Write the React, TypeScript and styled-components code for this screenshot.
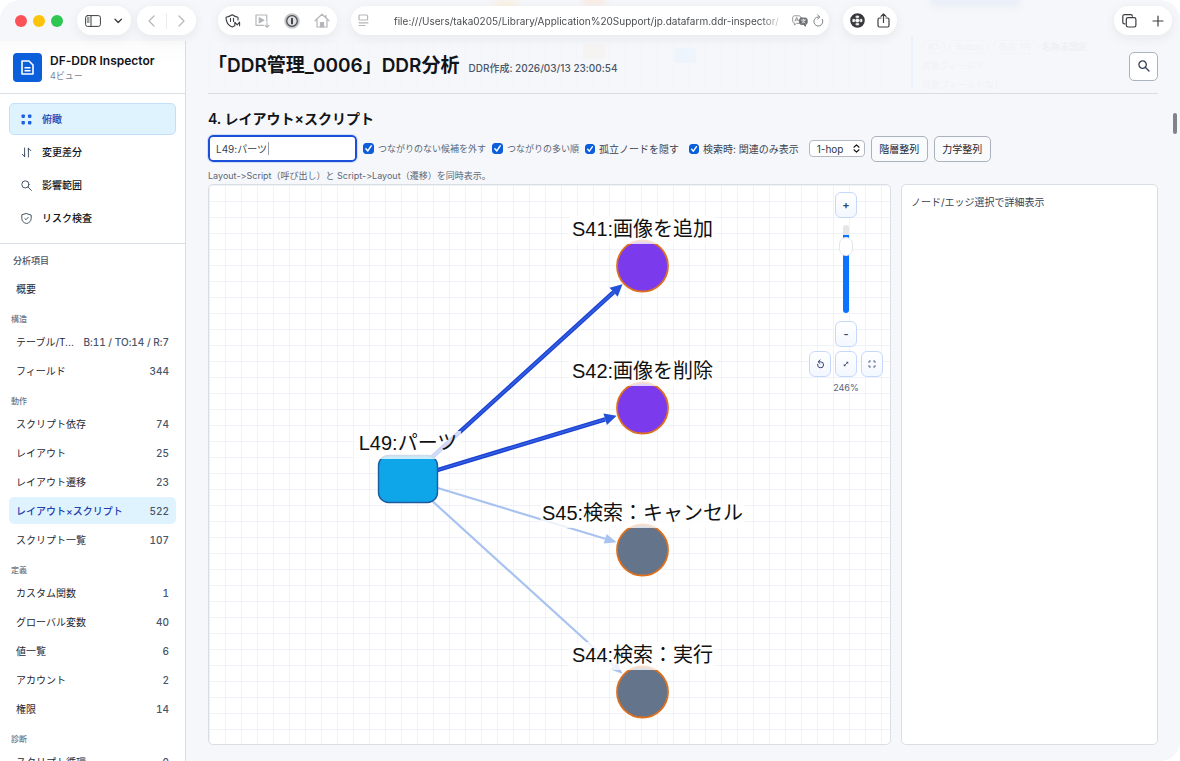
import React from "react";
import styled, { createGlobalStyle, css } from "styled-components";

const muted = "#5b6778";
const line = "#d9dee5";
const blue = "#0b5fdb";

const Global = createGlobalStyle`
  *, *::before, *::after { box-sizing: border-box; }
  body {
    margin: 0;
    background: #fff;
    color: #111418;
    font-family: Inter, "Noto Sans CJK JP", sans-serif;
    font-size: 10px;
    font-feature-settings: "calt" 0;
  }
  button, input, select { font: inherit; color: inherit; margin: 0; }
  button { padding: 0; cursor: pointer; }
  h1, h2, h3, p, ul { margin: 0; padding: 0; }
  ul { list-style: none; }
  a { color: inherit; text-decoration: none; }
`;

/* ---------- window frame ---------- */

const Window = styled.div`
  position: relative;
  display: flex;
  flex-direction: column;
  height: 100vh;
  overflow: hidden;
  border-radius: 20px;
  background: #f6f7fa;
`;

const TitleBar = styled.header`
  position: relative;
  z-index: 2;
  display: flex;
  align-items: center;
  flex: none;
  height: 41px;
  padding: 0 8px 0 15px;
`;

const Lights = styled.div`
  display: flex;
  gap: 6px;
  margin-right: 14px;
`;

const Light = styled.span<{ $color: string }>`
  width: 12px;
  height: 12px;
  border-radius: 50%;
  background: ${(p) => p.$color};
`;

const Pill = styled.div<{ $after?: number; $end?: boolean; $pad?: number; $gap?: number }>`
  display: flex;
  align-items: center;
  justify-content: space-between;
  flex: none;
  height: 29px;
  padding: 0 ${(p) => p.$pad ?? 8}px;
  margin-right: ${(p) => p.$after ?? 0}px;
  margin-left: ${(p) => (p.$end ? "auto" : 0)};
  gap: ${(p) => p.$gap ?? 12}px;
  border-radius: 15px;
  background: #fff;
  box-shadow: 0 3px 12px rgba(20, 25, 40, 0.07);
`;

const AddressPill = styled(Pill)`
  flex: 0 1 478px;
  gap: 5px;
  padding: 0 5px 0 7px;
`;

const Address = styled.input`
  flex: 1;
  min-width: 0;
  margin: 0 3px 0 20px;
  padding: 0;
  border: 0;
  outline: 0;
  background: none;
  font-size: 10px;
  color: #4b4d51;
  mask-image: linear-gradient(to right, #000 94%, transparent);
`;

const BarButton = styled.button<{ $dim?: boolean }>`
  display: grid;
  place-items: center;
  border: 0;
  background: none;
  color: ${(p) => (p.$dim ? "#b4b6b9" : "#3c3e42")};
`;

const Divider = styled.span`
  width: 1px;
  height: 16px;
  background: #ececee;
`;

/* ---------- content scrolled underneath the translucent bars ---------- */

const Underlay = styled.div`
  position: absolute;
  inset: 0 0 auto 186px;
  height: 90px;
  overflow: hidden;
  pointer-events: none;
`;

const UnderGrid = styled.div`
  position: absolute;
  inset: 41px 289px 0 22px;
  background-image: linear-gradient(#f3f5f8 1px, transparent 1px),
    linear-gradient(90deg, #f3f5f8 1px, transparent 1px);
  background-size: 16px 16px;
`;

const UnderBlock = styled.span<{ $x: number; $y: number; $w: number; $h: number; $c: string; $soft?: boolean }>`
  position: absolute;
  left: ${(p) => p.$x}px;
  top: ${(p) => p.$y}px;
  width: ${(p) => p.$w}px;
  height: ${(p) => p.$h}px;
  border-radius: 3px;
  background: ${(p) => p.$c};
  filter: ${(p) => (p.$soft ? "blur(3px)" : "none")};
`;

const UnderCard = styled.div`
  position: absolute;
  top: 37px;
  right: 22px;
  width: 247px;
  height: 52px;
  padding-left: 9px;
  border-left: 2px solid #eaf1fa;
  color: #f0f2f5;
  font-size: 9px;
  line-height: 19px;
`;

const UnderTags = styled.div`
  display: flex;
  align-items: center;
  gap: 4px;
  height: 19px;
  line-height: 12px;
  span { padding: 0 5px; border: 1px solid #f2f4f7; border-radius: 8px; }
  b { color: #edf0f4; font-weight: 600; }
`;

/* ---------- sidebar ---------- */

const Body = styled.div`
  position: relative;
  display: flex;
  flex: 1;
  min-height: 0;
`;

const Sidebar = styled.aside`
  flex: none;
  width: 186px;
  overflow: hidden;
  border-right: 1px solid ${line};
  background: linear-gradient(#fbfbfc, #fff 24px);
`;

const Brand = styled.div`
  display: flex;
  align-items: center;
  gap: 8px;
  height: 53px;
  padding: 0 13px;
  border-bottom: 1px solid ${line};
`;

const Logo = styled.span`
  display: grid;
  place-items: center;
  width: 29px;
  height: 29px;
  border-radius: 4px;
  background: ${blue};
`;

const BrandName = styled.h2`
  font-size: 12px;
  line-height: 17px;
  font-weight: 600;
`;

const BrandSub = styled.p`
  font-size: 9px;
  line-height: 13px;
  color: #7b8491;
`;

const Views = styled.nav`
  display: flex;
  flex-direction: column;
  gap: 1px;
  padding: 9px;
  border-bottom: 1px solid ${line};
`;

const View = styled.a<{ $on?: boolean }>`
  display: flex;
  align-items: center;
  gap: 10px;
  height: 32px;
  padding: 0 11px;
  border: 1px solid transparent;
  border-radius: 5px;
  font-size: 10px;
  line-height: 14px;
  font-weight: 500;
  ${(p) =>
    p.$on &&
    css`
      border-color: #c3e0fb;
      background: #dff3fe;
      color: #1e40af;
    `}
  svg { color: ${(p) => (p.$on ? "#1d5fe0" : "#475569")}; }
`;

const Sections = styled.nav`
  padding: 0 9px;
`;

const SectionsTitle = styled.h3`
  padding: 10px 4px 7px;
  font-size: 9px;
  line-height: 14px;
  font-weight: 500;
  color: #475569;
`;

const GroupTitle = styled.h3`
  padding: 11px 2px 3px;
  font-size: 8px;
  line-height: 12px;
  font-weight: 500;
  color: #6b7686;
`;

const Items = styled.ul`
  display: flex;
  flex-direction: column;
  gap: 2px;
`;

const Item = styled.a<{ $on?: boolean }>`
  display: flex;
  align-items: center;
  justify-content: space-between;
  gap: 8px;
  height: 27px;
  padding: 0 7px;
  border-radius: 5px;
  font-size: 10px;
  background: ${(p) => (p.$on ? "#dff3fe" : "none")};
  color: ${(p) => (p.$on ? "#1e40af" : "#1f2733")};
  font-weight: ${(p) => (p.$on ? 500 : 400)};
`;

const ItemName = styled.span`
  white-space: nowrap;
`;

const ItemCount = styled.span`
  flex: none;
  font-weight: 500;
  font-variant-numeric: tabular-nums;
  color: #475569;
`;

/* ---------- main ---------- */

const Main = styled.main`
  display: flex;
  flex-direction: column;
  flex: 1;
  min-width: 0;
  padding: 0 22px 16px;
`;

const PageHead = styled.div`
  display: flex;
  align-items: center;
  gap: 9px;
  flex: none;
  height: 53px;
  padding-bottom: 2px;
  border-bottom: 1px solid ${line};
`;

const Title = styled.h1`
  font-size: 19px;
  line-height: 24px;
  font-weight: 600;
  white-space: nowrap;
`;

const Created = styled.span`
  padding-top: 2px;
  font-size: 10px;
  font-weight: 500;
  color: #4b5768;
`;

const SearchButton = styled.button`
  display: grid;
  place-items: center;
  width: 29px;
  height: 29px;
  margin-left: auto;
  border: 1px solid #aab2bd;
  border-radius: 5px;
  background: #fff;
  color: #334155;
`;

const Heading = styled.h2`
  margin-top: 15px;
  font-size: 14px;
  line-height: 19px;
  font-weight: 600;
`;

const Tools = styled.div`
  display: flex;
  align-items: center;
  gap: 6px;
  height: 27px;
  margin-top: 7px;
`;

const QueryBox = styled.span`
  position: relative;
  flex: none;
`;

const Query = styled.input`
  display: block;
  width: 149px;
  height: 27px;
  padding: 0 6px;
  border: 2px solid #1d4ed8;
  border-radius: 5px;
  outline: 1px solid #cfe0fb;
  background: #fff;
  font-size: 10px;
  color: #3a4250;
`;

const Caret = styled.span`
  position: absolute;
  top: 7px;
  left: 60px;
  width: 1px;
  height: 13px;
  background: #9aa0a8;
`;

const Check = styled.label<{ $large?: boolean }>`
  display: flex;
  align-items: center;
  gap: 4px;
  margin-right: ${(p) => (p.$large ? 4 : 0)}px;
  white-space: nowrap;
  font-size: ${(p) => (p.$large ? 10 : 9)}px;
  color: ${(p) => (p.$large ? "#3a4250" : muted)};
`;

const CheckMark = styled.span<{ $size: number }>`
  display: grid;
  width: ${(p) => p.$size}px;
  height: ${(p) => p.$size}px;
  > * { grid-area: 1 / 1; width: 100%; height: 100%; }
  svg { pointer-events: none; opacity: 0; }
  input:checked + svg { opacity: 1; }
`;

const CheckInput = styled.input`
  appearance: none;
  border: 1px solid ${blue};
  border-radius: 3px;
  background: #fff;
  &:checked { background: ${blue}; }
`;

const Hop = styled.span`
  position: relative;
  flex: none;
  svg { position: absolute; right: 5px; top: 4px; pointer-events: none; }
`;

const HopSelect = styled.select`
  appearance: none;
  display: block;
  width: 56px;
  height: 17px;
  padding: 0 7px;
  border: 1px solid #b3bac4;
  border-radius: 4px;
  background: #fff;
  font-size: 10px;
  color: #30363f;
`;

const ToolButton = styled.button`
  flex: none;
  width: 57px;
  height: 26px;
  border: 1px solid #aab2bd;
  border-radius: 5px;
  background: #f9fafc;
  font-size: 10px;
  line-height: 14px;
  color: #1f2733;
`;

const Note = styled.p`
  margin-top: 7px;
  margin-bottom: 1px;
  font-size: 9px;
  line-height: 14px;
  color: ${muted};
`;

const Columns = styled.div`
  display: grid;
  grid-template-columns: minmax(0, 1fr) 257px;
  gap: 10px;
  flex: 1;
  min-height: 0;
`;

const panel = css`
  border: 1px solid ${line};
  border-radius: 5px;
  background-color: #fff;
`;

const Canvas = styled.section`
  ${panel}
  position: relative;
  overflow: hidden;
  background-image: linear-gradient(#eff2f6 1px, transparent 1px),
    linear-gradient(90deg, #eff2f6 1px, transparent 1px);
  background-size: 16px 16px;
`;

const GraphSvg = styled.svg`
  display: block;
  width: 100%;
  height: 100%;
  text {
    font-family: "Liberation Sans", "Noto Sans CJK JP", sans-serif;
    font-size: 20px;
    text-anchor: middle;
    fill: #111;
  }
`;

const Detail = styled.aside`
  ${panel}
  padding: 10px 9px;
  font-size: 10px;
  line-height: 14px;
  color: #3a4250;
`;

const Zoom = styled.div`
  position: absolute;
  top: 7px;
  right: 7px;
  display: flex;
  flex-direction: column;
  align-items: center;
`;

const ZoomButton = styled.button`
  display: grid;
  place-items: center;
  width: 22px;
  height: 26px;
  border: 1px solid #c5d8fc;
  border-radius: 6px;
  background: linear-gradient(#fff, #f3f7ff);
  font-size: 11px;
  font-weight: 600;
  color: #33436b;
`;

const ZoomRow = styled.div`
  display: flex;
  gap: 4px;
  margin-top: 4px;
`;

const ZoomSlider = styled.input`
  appearance: none;
  writing-mode: vertical-lr;
  direction: rtl;
  width: 14px;
  height: 88px;
  margin: 7px 0 8px;
  background: none;
  &::-webkit-slider-runnable-track {
    width: 6px;
    height: 88px;
    border-radius: 3px;
    background: linear-gradient(#e6e6e8 10px, #0a74ff 10px);
  }
  &::-webkit-slider-thumb {
    appearance: none;
    width: 14px;
    height: 19px;
    margin-left: -4px;
    border: 1px solid #e4e7eb;
    border-radius: 7px;
    background: #fff;
  }
`;

const ZoomValue = styled.output`
  margin-top: 5px;
  font-size: 9px;
  line-height: 12px;
  color: #56637a;
`;

const ScrollThumb = styled.span`
  position: absolute;
  top: 113px;
  right: 3px;
  width: 4px;
  height: 21px;
  border-radius: 2px;
  background: #808388;
`;

/* ---------- icons ---------- */

type IconProps = { w: number; h?: number; sw?: number; children: React.ReactNode };
const Icon = ({ w, h = w, sw = 1, children }: IconProps) => (
  <svg
    width={w}
    height={h}
    viewBox={`0 0 ${w} ${h}`}
    fill="none"
    stroke="currentColor"
    strokeWidth={sw}
    strokeLinecap="round"
    strokeLinejoin="round"
    aria-hidden="true"
  >
    {children}
  </svg>
);

const viewIcons: Record<string, React.ReactNode> = {
  grid: (
    <Icon w={11}>
      <g fill="currentColor" stroke="none">
        <rect x="0.5" y="0.5" width="3.4" height="3.4" rx="0.8" />
        <rect x="7" y="0.5" width="3.4" height="3.4" rx="0.8" />
        <rect x="0.5" y="7" width="3.4" height="3.4" rx="0.8" />
        <rect x="7" y="7" width="3.4" height="3.4" rx="0.8" />
      </g>
    </Icon>
  ),
  arrows: (
    <Icon w={11}>
      <path d="M3.6 1v8.6M1.2 7.3l2.4 2.4V7M7.4 10V1.2M7.4 4V1.2l2.5 2.5" />
    </Icon>
  ),
  search: (
    <Icon w={11}>
      <circle cx="4.4" cy="4.4" r="3.6" />
      <path d="M7.1 7.1l3.300 3.300" />
    </Icon>
  ),
  shield: (
    <Icon w={11}>
      <path d="M5.5.6l4.700 1.500v3.400c0 2.500-1.900 4.300-4.700 5.100-2.800-.8-4.700-2.600-4.700-5.100V2.100z" />
      <path d="M3.900 5.700l1.200 1L7.200 4.400" />
    </Icon>
  ),
};

/* ---------- data ---------- */

const views = [
  { icon: "grid", name: "俯瞰", on: true },
  { icon: "arrows", name: "変更差分" },
  { icon: "search", name: "影響範囲" },
  { icon: "shield", name: "リスク検査" },
];

type Row = [string, string?];
const groups: { title?: string; rows: Row[] }[] = [
  { rows: [["概要"]] },
  { title: "構造", rows: [["テーブル/T...", "B:11 / TO:14 / R:7"], ["フィールド", "344"]] },
  {
    title: "動作",
    rows: [
      ["スクリプト依存", "74"],
      ["レイアウト", "25"],
      ["レイアウト遷移", "23"],
      ["レイアウト×スクリプト", "522"],
      ["スクリプト一覧", "107"],
    ],
  },
  {
    title: "定義",
    rows: [
      ["カスタム関数", "1"],
      ["グローバル変数", "40"],
      ["値一覧", "6"],
      ["アカウント", "2"],
      ["権限", "14"],
    ],
  },
  { title: "診断", rows: [["スクリプト循環", "0"]] },
];

const current = "レイアウト×スクリプト";

const scripts = [
  { y: 81, label: "S41:画像を追加", half: 74, fill: "#7c3aed" },
  { y: 223, label: "S42:画像を削除", half: 74, fill: "#7c3aed" },
  { y: 365, label: "S45:検索：キャンセル", half: 102, fill: "#64748b" },
  { y: 507, label: "S44:検索：実行", half: 74, fill: "#64748b" },
];

const source = { x: 199, y: 294 };
const targetX = 433.5;

function Edge({ y, strong }: { y: number; strong: boolean }) {
  const dx = targetX - source.x;
  const dy = y - source.y;
  const len = Math.hypot(dx, dy);
  const ux = dx / len;
  const uy = dy / len;
  const tip = { x: targetX - ux * 27, y: y - uy * 27 };
  const base = { x: tip.x - ux * 12, y: tip.y - uy * 12 };
  const half = strong ? 6 : 5;
  const head = `${tip.x},${tip.y} ${base.x - uy * half},${base.y + ux * half} ${base.x + uy * half},${base.y - ux * half}`;
  const coords = { x1: source.x, y1: source.y, x2: base.x, y2: base.y };
  return (
    <g>
      <line {...coords} stroke={strong ? "#1c40d4" : "#a9c3f0"} strokeWidth={strong ? 4.4 : 2.2} />
      {strong && <line {...coords} stroke="#315fe0" strokeWidth="1.8" />}
      <polygon points={head} fill={strong ? "#2450da" : "#a9c3f0"} />
    </g>
  );
}

function Graph() {
  return (
    <GraphSvg role="img" aria-label="L49:パーツ の関連グラフ">
      {scripts.map((s, i) => (
        <Edge key={s.label} y={s.y} strong={i < 2} />
      ))}
      {scripts.map((s) => (
        <g key={s.label}>
          <circle cx={targetX} cy={s.y} r="25.5" fill={s.fill} stroke="#de6f1c" strokeWidth="1.8" />
          <rect x={targetX - s.half} y={s.y - 50} width={s.half * 2} height="28" fill="#fff" fillOpacity="0.78" />
          <text x={targetX} y={s.y - 30}>{s.label}</text>
        </g>
      ))}
      <rect x="169.500" y="270.500" width="59" height="47" rx="10" fill="#0ea5e9" stroke="#1e5aa0" strokeWidth="1.400" />
      <rect x="145" y="246" width="107" height="28" fill="#fff" fillOpacity="0.78" />
      <text x="199" y="265">L49:パーツ</text>
    </GraphSvg>
  );
}

function Option({ label, large }: { label: string; large?: boolean }) {
  return (
    <Check $large={large}>
      <CheckMark $size={large ? 10 : 11}>
        <CheckInput type="checkbox" defaultChecked />
        <svg viewBox="0 0 11 11" fill="none" stroke="#fff" strokeWidth="1.5" strokeLinecap="round" strokeLinejoin="round" aria-hidden="true">
          <path d="M2.900 5.800l1.900 2.100 3.400-5" />
        </svg>
      </CheckMark>
      {label}
    </Check>
  );
}

function BrowserBar() {
  return (
    <TitleBar>
      <Lights>
        <Light $color="#fb5258" />
        <Light $color="#fbc30b" />
        <Light $color="#2fc752" />
      </Lights>
      <Pill $after={6} $gap={13}>
        <BarButton aria-label="サイドバー">
          <Icon w={16} h={12}>
            <rect x="0.6" y="0.6" width="14.800" height="10.800" rx="2" />
            <path d="M6 .8v10.400M2.300 3h1.800M2.300 5h1.800M2.300 7h1.800" />
          </Icon>
        </BarButton>
        <BarButton aria-label="タブグループ">
          <Icon w={9} h={6} sw={1.3}><path d="M1 1.200l3.200 3.300 3.200-3.300" /></Icon>
        </BarButton>
      </Pill>
      <Pill $after={22} $pad={11} $gap={11}>
        <BarButton $dim aria-label="戻る">
          <Icon w={7} h={12} sw={1.200}><path d="M6 1L1 6l5 5" /></Icon>
        </BarButton>
        <Divider />
        <BarButton $dim aria-label="進む">
          <Icon w={7} h={12} sw={1.200}><path d="M1 1l5 5-5 5" /></Icon>
        </BarButton>
      </Pill>
      <Pill $after={14} $pad={7} $gap={14}>
        <BarButton aria-label="プライバシー">
          <Icon w={16} h={14} sw={1.100}>
            <path d="M13 6V3.300C11 3 9.300 2.300 7.200.8 5.200 2.200 3.200 3 1 3.200c0 4.600 1.700 8 6.200 9.800l2-1" />
            <path d="M5.500 4.300v3.200M8.500 4.300v3.200M9.800 11.800V8.200l2.400 2.600 2.400-2.600v3.600" />
          </Icon>
        </BarButton>
        <BarButton $dim aria-label="再生">
          <Icon w={15} h={14} sw={1.200}>
            <path d="M8.500 11.300H1V1h10.800v6.500M12 9v4M10 11.300l2 2 2-2" />
            <path d="M4.300 3.700v5l4.500-2.500z" fill="currentColor" />
          </Icon>
        </BarButton>
        <BarButton aria-label="パスワード">
          <Icon w={16}>
            <circle cx="8" cy="8" r="7.800" fill="#c6c8cb" stroke="none" />
            <circle cx="8" cy="8" r="5.300" fill="#dfe0e2" stroke="#4b4d51" strokeWidth="1.300" />
            <path d="M8 5.600v4.800" strokeWidth="1.900" />
          </Icon>
        </BarButton>
        <BarButton $dim aria-label="ホーム">
          <Icon w={16} h={15} sw={1.200}>
            <path d="M1 7.800L8 1.200l7 6.600M3 6.500V14h10V6.500M12 4.500V2" />
            <path d="M6.500 14V9.500h3V14z" fill="currentColor" />
          </Icon>
        </BarButton>
      </Pill>
      <AddressPill $after={14}>
        <BarButton $dim aria-label="ページメニュー">
          <Icon w={11} h={13} sw={1.200}>
            <rect x="1" y="1" width="8.600" height="5" rx="1" />
            <path d="M1 8.800h9M1 11.500h6" />
          </Icon>
        </BarButton>
        <Address
          readOnly
          aria-label="アドレス"
          value="file:///Users/taka0205/Library/Application%20Support/jp.datafarm.ddr-inspector/"
        />
        <BarButton aria-label="翻訳">
          <Icon w={16} h={12} sw={0.900}>
            <path d="M7 8.300H4.500L2.500 10V8.200C1.300 8 .7 7.300.7 6.200V2.800C.7 1.500 1.400.8 2.700.8h4c1.300 0 2 .7 2 1.700M3 6l1.700-3.600L6.400 6M3.600 5h2.200" stroke="#8a8c90" />
            <path d="M9.500 3h3.700c1.300 0 2 .7 2 2v2.500c0 1-.6 1.800-1.700 1.900v1.900l-2-1.800h-2c-1.300 0-2-.7-2-2V5c0-1.300.7-2 2-2z" fill="#6c6e72" stroke="#6c6e72" />
            <path d="M9.300 5h4.400M11.500 4.200V5M10 8c1.500-.6 2.400-1.600 2.700-3M10.300 5.800c.7 1 1.500 1.800 2.700 2.200" stroke="#fff" strokeWidth="0.700" />
          </Icon>
        </BarButton>
        <BarButton aria-label="再読み込み">
          <Icon w={11} h={13}>
            <path d="M9.300 5.300A4.500 4.500 0 1 1 5.200 3h1M4.600.8L6.700 3 4.600 5.200" stroke="#808286" />
          </Icon>
        </BarButton>
      </AddressPill>
      <Pill $pad={7}>
        <BarButton aria-label="拡張機能">
          <Icon w={15}>
            <circle cx="7.500" cy="7.500" r="6.500" stroke="#37393d" strokeWidth="1.600" fill="#37393d" />
            <path d="M6.300 3h2.400v1.600H6.300zM6.300 10.400h2.400V12H6.300zM3 6.300h1.600v2.400H3zM10.400 6.300H12v2.400h-1.600zM5.900 6.800h3.200v1.400H5.900zM6.800 5.900h1.400v3.200H6.800z" fill="#fff" stroke="#fff" strokeWidth="0.600" />
          </Icon>
        </BarButton>
        <BarButton aria-label="共有">
          <Icon w={13} h={15} sw={1.200}>
            <path d="M4 5H2.500C1.500 5 1 5.500 1 6.500v6c0 1 .5 1.500 1.500 1.500h8c1 0 1.500-.5 1.500-1.500v-6c0-1-.5-1.500-1.500-1.500H9M6.500 9.500V1M4 3.300L6.500.8 9 3.300" />
          </Icon>
        </BarButton>
      </Pill>
      <Pill $end $gap={15}>
        <BarButton aria-label="タブ一覧">
          <Icon w={15} h={14} sw={1.200}>
            <path d="M3 9.800H2.500C1.300 9.800.8 9.200.8 8.200v-6C.8 1.200 1.300.7 2.500.7h6.300c1 0 1.600.5 1.600 1.500" />
            <rect x="4.300" y="3.700" width="9.600" height="9.300" rx="1.700" />
          </Icon>
        </BarButton>
        <BarButton aria-label="新規タブ">
          <Icon w={12} sw={1.200}><path d="M6 1v10M1 6h10" /></Icon>
        </BarButton>
      </Pill>
    </TitleBar>
  );
}

export default function App() {
  return (
    <Window>
      <Global />
      <Underlay aria-hidden="true">
        <UnderGrid />
        <UnderBlock $x={309} $y={0} $w={22} $h={14} $c="#fbf1e4" $soft />
        <UnderBlock $x={397} $y={-4} $w={22} $h={9} $c="#fbebe2" $soft />
        <UnderBlock $x={397} $y={44} $w={22} $h={15} $c="#f5f4f3" />
        <UnderBlock $x={488} $y={48} $w={22} $h={15} $c="#edf4fb" />
        <UnderBlock $x={744} $y={-4} $w={90} $h={11} $c="#e9eff8" $soft />
        <UnderCard>
          <UnderTags>
            <span>#3</span>
            <span>Button</span>
            <span>条件 1件</span>
            <b>名称未設定</b>
          </UnderTags>
          <div>対象フィールド</div>
          <div>対象フィールドなし</div>
        </UnderCard>
      </Underlay>
      <BrowserBar />
      <Body>
        <Sidebar>
          <Brand>
            <Logo>
              <svg width="15" height="17" viewBox="0 0 15 17" fill="none" stroke="#fff" strokeWidth="1.600" strokeLinejoin="round" aria-hidden="true">
                <path d="M2 2h7l4 4v9H2z" />
                <path d="M4.500 8.700h6M4.500 11.800h6" />
              </svg>
            </Logo>
            <div>
              <BrandName>DF-DDR Inspector</BrandName>
              <BrandSub>4ビュー</BrandSub>
            </div>
          </Brand>
          <Views aria-label="ビュー">
            {views.map((v) => (
              <View key={v.name} href="#" $on={v.on}>
                {viewIcons[v.icon]}
                {v.name}
              </View>
            ))}
          </Views>
          <Sections aria-label="分析項目">
            <SectionsTitle>分析項目</SectionsTitle>
            {groups.map((g, i) => (
              <div key={i}>
                {g.title && <GroupTitle>{g.title}</GroupTitle>}
                <Items>
                  {g.rows.map(([name, count]) => (
                    <li key={name}>
                      <Item href="#" $on={name === current}>
                        <ItemName>{name}</ItemName>
                        {count && <ItemCount>{count}</ItemCount>}
                      </Item>
                    </li>
                  ))}
                </Items>
              </div>
            ))}
          </Sections>
        </Sidebar>
        <Main>
          <PageHead>
            <Title>「DDR管理_0006」DDR分析</Title>
            <Created>DDR作成: 2026/03/13 23:00:54</Created>
            <SearchButton aria-label="検索">
              <Icon w={12} sw={1.300}>
                <circle cx="4.600" cy="4.600" r="3.700" />
                <path d="M7.300 7.300l3.700 3.700" />
              </Icon>
            </SearchButton>
          </PageHead>
          <Heading>4. レイアウト×スクリプト</Heading>
          <Tools>
            <QueryBox>
              <Query aria-label="ノード検索" defaultValue="L49:パーツ" />
              <Caret aria-hidden="true" />
            </QueryBox>
            <Option label="つながりのない候補を外す" />
            <Option label="つながりの多い順" />
            <Option large label="孤立ノードを隠す" />
            <Option large label="検索時: 関連のみ表示" />
            <Hop>
              <HopSelect aria-label="ホップ数" defaultValue="1">
                <option value="1">1-hop</option>
                <option value="2">2-hop</option>
              </HopSelect>
              <Icon w={7} h={9} sw={1.200}><path d="M1 3.200L3.500.9 6 3.200M1 5.800l2.500 2.300L6 5.800" /></Icon>
            </Hop>
            <ToolButton>階層整列</ToolButton>
            <ToolButton>力学整列</ToolButton>
          </Tools>
          <Note>Layout-&gt;Script（呼び出し）と Script-&gt;Layout（遷移）を同時表示。</Note>
          <Columns>
            <Canvas>
              <Graph />
              <Zoom>
                <ZoomButton aria-label="拡大">+</ZoomButton>
                <ZoomSlider type="range" aria-label="ズーム" min={0} max={100} defaultValue={83} />
                <ZoomButton aria-label="縮小">-</ZoomButton>
                <ZoomRow>
                  <ZoomButton aria-label="リセット">
                    <Icon w={9} h={10}><path d="M1.600 5.200A3 3 0 1 0 4.500 2.800H2.500M4 .9L2.200 2.800 4 4.500" /></Icon>
                  </ZoomButton>
                  <ZoomButton aria-label="選択に合わせる">
                    <Icon w={6} sw={0.800}><path d="M1.200 4.800l3.600-3.600M3.600 1.200h1.200v1.200M1.200 3.600v1.200h1.200" /></Icon>
                  </ZoomButton>
                  <ZoomButton aria-label="全体表示">
                    <Icon w={8} sw={0.800}><path d="M1 2.500V1h1.500M5.500 1H7v1.500M7 5.500V7H5.500M2.500 7H1V5.500" /></Icon>
                  </ZoomButton>
                </ZoomRow>
                <ZoomValue>246%</ZoomValue>
              </Zoom>
            </Canvas>
            <Detail>ノード/エッジ選択で詳細表示</Detail>
          </Columns>
        </Main>
      </Body>
      <ScrollThumb />
    </Window>
  );
}
